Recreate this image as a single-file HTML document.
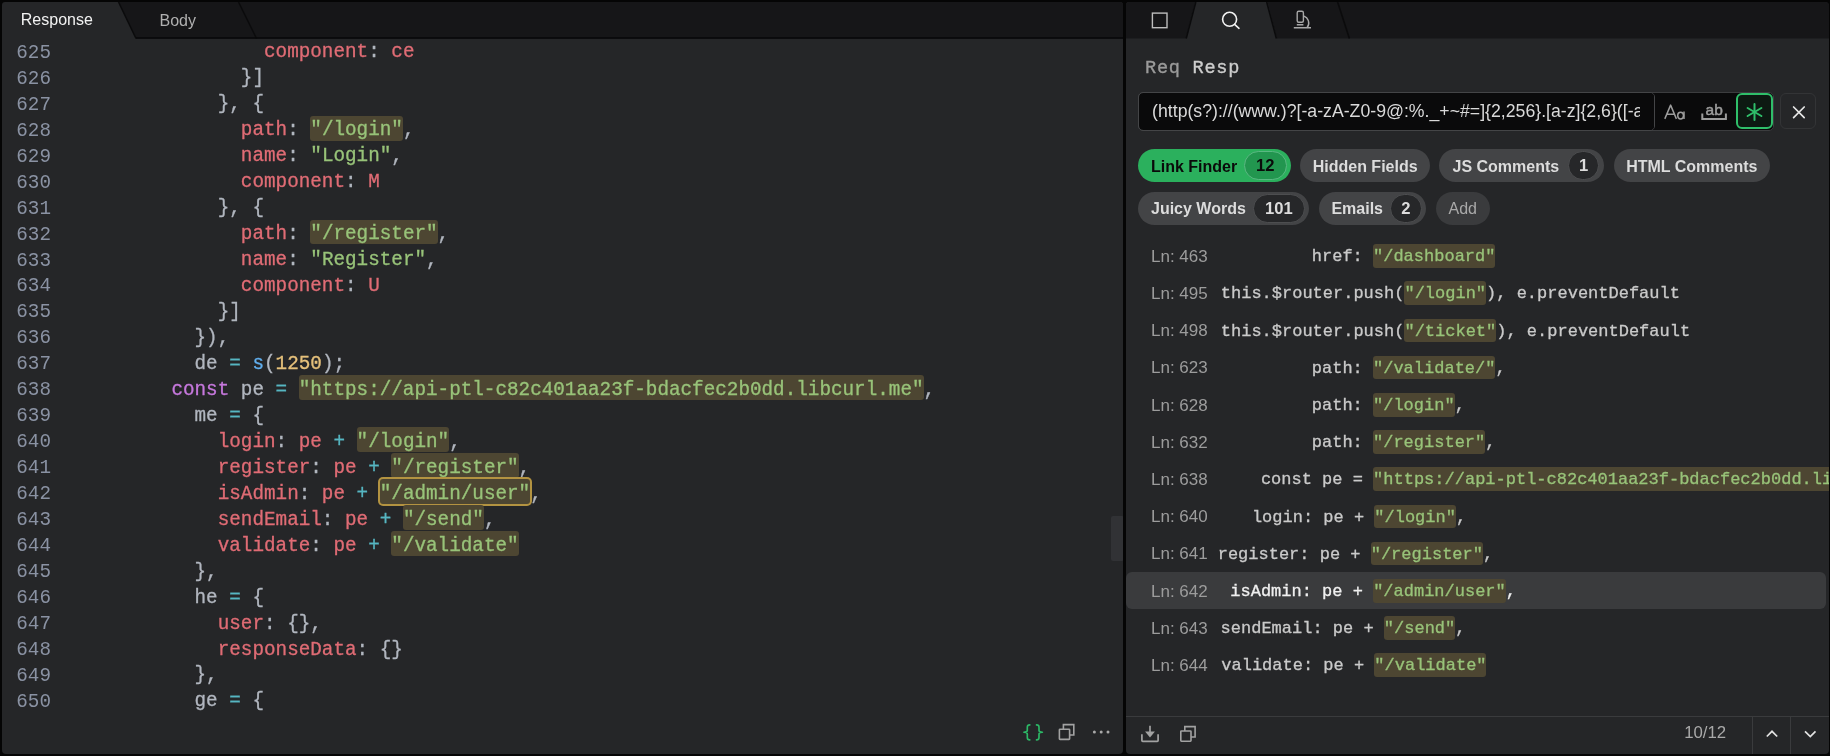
<!DOCTYPE html>
<html><head><meta charset="utf-8">
<style>
*{box-sizing:border-box;margin:0;padding:0}
html,body{width:1830px;height:756px;overflow:hidden;background:#050505}
body{position:relative;font-family:"Liberation Sans",sans-serif}
.panel{position:absolute;background:#252628;overflow:hidden;will-change:transform}
#lp{left:2px;top:1.5px;width:1120.8px;height:751.5px;border-radius:3px 3px 4px 4px}
#rp{left:1126px;top:1.5px;width:702.5px;height:751.5px;border-radius:3px 4px 4px 4px}
.tabbar{position:absolute;left:0;top:0;right:0;height:36.5px}
.tabbar svg{position:absolute;left:0;top:0}
.tab-label{position:absolute;font-size:16px;line-height:20px}
#code{position:absolute;left:0;top:0;width:1121.5px;height:751.5px;z-index:0;will-change:transform}
.ln{position:absolute;left:8.5px;width:40px;text-align:right;transform:scaleX(0.95);transform-origin:100% 50%;height:26px;line-height:26px;font:20.3px "Liberation Mono",monospace;line-height:26px;color:#8a92a3;white-space:pre}
.cl{position:absolute;height:26px;font:19.3px "Liberation Mono",monospace;line-height:26px;color:#b1b6bf;white-space:pre;-webkit-text-stroke:0.3px currentColor}
.r{color:#e06c75}.g{color:#98c379}.c{color:#56b6c2}.p{color:#c678dd}.o{color:#e5c07b}.b{color:#61afef}
.hl,.hlc{position:absolute;height:24.8px;background:#4d4632;border-radius:3px}
.hlc{box-shadow:0 0 0 2px #b39341}
#results{position:absolute;left:0;top:0;width:702.5px;height:751.5px;z-index:0}
.rsel{position:absolute;left:0;width:700px;height:37.2px;background:#3a3b3d;border-radius:6px}
.rl{position:absolute;left:25px;height:26px;line-height:26px;font-size:17px;color:#9c9c9c;white-space:pre}
.rt{position:absolute;height:26px;line-height:26px;font:17px "Liberation Mono",monospace;color:#cacaca;white-space:pre;-webkit-text-stroke:0.3px currentColor}
.rt.sel{color:#f0f0f0}
.rhl{position:absolute;height:23.8px;background:#4d4632;border-radius:3px}
.reqresp{position:absolute;font:18.6px "Liberation Mono",monospace;letter-spacing:0.72px;-webkit-text-stroke:0.35px currentColor;line-height:20px;white-space:pre}
#inwrap{position:absolute;left:11.9px;top:90px;width:636px;height:38.8px;border:1px solid #3c3d3f;border-radius:5px;background:#0a0a0b}
#intext{position:absolute;left:-1px;top:-1px;width:517.5px;height:38.8px;border:1.3px solid #444547;border-radius:5px;padding-left:13.2px;font-size:17.7px;line-height:36.4px;color:#dadada;white-space:pre;overflow:hidden}
#intext::after{content:'';position:absolute;right:0;top:0;width:14px;height:100%;background:#0a0a0b}
#regex{position:absolute;left:610px;top:91px;width:37.4px;height:36px;border:2px solid #2fbf6a;border-radius:6px;background:#0d1912}
#closebtn{position:absolute;left:653.8px;top:91px;width:36.2px;height:36.4px;border:1px solid #333436;border-radius:6px}
.chip{position:absolute;height:33.3px;border-radius:17px;background:#434446}
.chip span{position:absolute;top:7.4px;font-weight:bold;font-size:16px;line-height:20px;color:#dcdcdc;white-space:pre}
.chip i{position:absolute;top:2.1px;height:28.8px;border-radius:14.4px;background:#262729;border:1.8px solid #4d4e50}
.chip i b{position:absolute;top:3.7px;text-align:center;font-style:normal;font-weight:bold;font-size:16.6px;line-height:20px;color:#dcdcdc}
.chip.green{background:#2bb05d}
.chip.green span{color:#0a0a0a}
.chip.green i{background:#22964f;border-color:#5ab882}
.chip.green i b{color:#0a0a0a}
.chip.add{background:#3a3b3d}
.chip.add span{font-weight:normal;color:#a9a9a9}
</style></head><body>
<div id="lp" class="panel">
  <div class="tabbar">
    <svg width="1122" height="38">
      <path d="M116.5 0 L1122 0 L1122 36.5 L134 36.5 Z" fill="#161618"/>
      <path d="M116.5 0 L134 36.5" stroke="#0b0b0c" stroke-width="1.5"/>
      <path d="M236.5 0 L254.5 36.5" stroke="#0b0b0c" stroke-width="1.5"/>
      <path d="M134 36 L1122 36" stroke="#070708" stroke-width="1.6"/>
    </svg>
    <div class="tab-label" style="left:18.8px;top:7.7px;color:#f2f2f2">Response</div>
    <div class="tab-label" style="left:157.5px;top:8.5px;color:#b0b0b0">Body</div>
  </div>
  <div id="code">
<div class="ln" style="top:37.80px">625</div>
<div class="cl" style="top:37.30px;left:262.02px"><span class="r">component</span>: <span class="r">ce</span></div>
<div class="ln" style="top:63.77px">626</div>
<div class="cl" style="top:63.27px;left:238.86px">}]</div>
<div class="ln" style="top:89.73px">627</div>
<div class="cl" style="top:89.23px;left:215.71px">}, {</div>
<div class="ln" style="top:115.70px">628</div>
<div class="hl" style="left:308.32px;top:113.80px;width:92.61px"></div>
<div class="cl" style="top:115.20px;left:238.86px"><span class="r">path</span>: <span class="g">&quot;/login&quot;</span>,</div>
<div class="ln" style="top:141.66px">629</div>
<div class="cl" style="top:141.16px;left:238.86px"><span class="r">name</span>: <span class="g">&quot;Login&quot;</span>,</div>
<div class="ln" style="top:167.63px">630</div>
<div class="cl" style="top:167.13px;left:238.86px"><span class="r">component</span>: <span class="r">M</span></div>
<div class="ln" style="top:193.60px">631</div>
<div class="cl" style="top:193.10px;left:215.71px">}, {</div>
<div class="ln" style="top:219.56px">632</div>
<div class="hl" style="left:308.32px;top:217.66px;width:127.34px"></div>
<div class="cl" style="top:219.06px;left:238.86px"><span class="r">path</span>: <span class="g">&quot;/register&quot;</span>,</div>
<div class="ln" style="top:245.53px">633</div>
<div class="cl" style="top:245.03px;left:238.86px"><span class="r">name</span>: <span class="g">&quot;Register&quot;</span>,</div>
<div class="ln" style="top:271.49px">634</div>
<div class="cl" style="top:270.99px;left:238.86px"><span class="r">component</span>: <span class="r">U</span></div>
<div class="ln" style="top:297.46px">635</div>
<div class="cl" style="top:296.96px;left:215.71px">}]</div>
<div class="ln" style="top:323.43px">636</div>
<div class="cl" style="top:322.93px;left:192.56px">}),</div>
<div class="ln" style="top:349.39px">637</div>
<div class="cl" style="top:348.89px;left:192.56px">de <span class="c">=</span> <span class="b">s</span>(<span class="o">1250</span>);</div>
<div class="ln" style="top:375.36px">638</div>
<div class="hl" style="left:296.74px;top:373.46px;width:625.10px"></div>
<div class="cl" style="top:374.86px;left:169.41px"><span class="p">const</span> pe <span class="c">=</span> <span class="g">&quot;https://api-ptl-c82c401aa23f-bdacfec2b0dd.libcurl.me&quot;</span>,</div>
<div class="ln" style="top:401.32px">639</div>
<div class="cl" style="top:400.82px;left:192.56px">me <span class="c">=</span> {</div>
<div class="ln" style="top:427.29px">640</div>
<div class="hl" style="left:354.62px;top:425.39px;width:92.61px"></div>
<div class="cl" style="top:426.79px;left:215.71px"><span class="r">login</span>: <span class="r">pe</span> <span class="c">+</span> <span class="g">&quot;/login&quot;</span>,</div>
<div class="ln" style="top:453.26px">641</div>
<div class="hl" style="left:389.35px;top:451.36px;width:127.34px"></div>
<div class="cl" style="top:452.76px;left:215.71px"><span class="r">register</span>: <span class="r">pe</span> <span class="c">+</span> <span class="g">&quot;/register&quot;</span>,</div>
<div class="ln" style="top:479.22px">642</div>
<div class="hlc" style="left:377.78px;top:477.32px;width:150.49px"></div>
<div class="cl" style="top:478.72px;left:215.71px"><span class="r">isAdmin</span>: <span class="r">pe</span> <span class="c">+</span> <span class="g">&quot;/admin/user&quot;</span>,</div>
<div class="ln" style="top:505.19px">643</div>
<div class="hl" style="left:400.93px;top:503.29px;width:81.03px"></div>
<div class="cl" style="top:504.69px;left:215.71px"><span class="r">sendEmail</span>: <span class="r">pe</span> <span class="c">+</span> <span class="g">&quot;/send&quot;</span>,</div>
<div class="ln" style="top:531.15px">644</div>
<div class="hl" style="left:389.35px;top:529.25px;width:127.34px"></div>
<div class="cl" style="top:530.65px;left:215.71px"><span class="r">validate</span>: <span class="r">pe</span> <span class="c">+</span> <span class="g">&quot;/validate&quot;</span></div>
<div class="ln" style="top:557.12px">645</div>
<div class="cl" style="top:556.62px;left:192.56px">},</div>
<div class="ln" style="top:583.09px">646</div>
<div class="cl" style="top:582.59px;left:192.56px">he <span class="c">=</span> {</div>
<div class="ln" style="top:609.05px">647</div>
<div class="cl" style="top:608.55px;left:215.71px"><span class="r">user</span>: {},</div>
<div class="ln" style="top:635.02px">648</div>
<div class="cl" style="top:634.52px;left:215.71px"><span class="r">responseData</span>: {}</div>
<div class="ln" style="top:660.98px">649</div>
<div class="cl" style="top:660.48px;left:192.56px">},</div>
<div class="ln" style="top:686.95px">650</div>
<div class="cl" style="top:686.45px;left:192.56px">ge <span class="c">=</span> {</div>
  </div>
  <div style="position:absolute;left:1109px;top:514px;width:12.5px;height:45px;background:#313235;border-radius:2px"></div>
  <svg style="position:absolute;left:0;top:700px" width="1122" height="52">
    <g fill="none" stroke="#2cb866" stroke-width="1.65" stroke-linecap="round" stroke-linejoin="round">
      <path d="M1027.8 22.9 Q1025.3 22.9 1025.3 25.2 V28.6 Q1025.3 30.1 1021.9 30.3 Q1025.3 30.5 1025.3 32 V35.5 Q1025.3 37.9 1027.8 37.9"/>
      <path d="M1034.5 22.9 Q1037 22.9 1037 25.2 V28.6 Q1037 30.1 1040.4 30.3 Q1037 30.5 1037 32 V35.5 Q1037 37.9 1034.5 37.9"/>
    </g>
    <g fill="none" stroke="#a2a2a2" stroke-width="1.6">
      <rect x="1057.4" y="27.2" width="10.2" height="10.2" rx="0.6"/>
      <path d="M1061.4 27.2 V22.6 H1071.8 V33 H1067.6"/>
    </g>
    <g fill="#a9a9a9">
      <circle cx="1092.4" cy="30" r="1.5"/><circle cx="1099.2" cy="30" r="1.5"/><circle cx="1106" cy="30" r="1.5"/>
    </g>
  </svg>
</div>
<div id="rp" class="panel">
  <div class="tabbar">
    <svg width="703" height="38">
      <path d="M0 36.5 L0 0 L69 0 L59.7 36.5 Z" fill="#161618"/>
      <path d="M141.7 0 L703 0 L703 36.5 L151 36.5 Z" fill="#161618"/>
      <path d="M69.8 0 L60.2 36.5" stroke="#0b0b0c" stroke-width="1.6"/>
      <path d="M140.7 0 L150.4 36.5" stroke="#0b0b0c" stroke-width="1.6"/>
      <path d="M211.6 0 L223.4 36.5" stroke="#0b0b0c" stroke-width="1.6"/>
      <rect x="26.4" y="11.1" width="14.6" height="14.6" fill="none" stroke="#bdbdbd" stroke-width="1.4"/>
      <circle cx="103.6" cy="17.3" r="7" fill="none" stroke="#f2f2f2" stroke-width="1.6"/>
      <path d="M108.6 22.4 L113 26.3" stroke="#f2f2f2" stroke-width="1.6" stroke-linecap="round"/>
      <g fill="none" stroke="#a8a8a8" stroke-width="1.4">
        <rect x="171.2" y="9.2" width="6.2" height="11" rx="1.5"/>
        <path d="M170.8 22.8 H177.4"/>
        <path d="M167.8 25.7 H185"/>
        <path d="M177.4 13.8 A8 7.6 0 0 1 181 25.7"/>
      </g>
    </svg>
  </div>
  <div class="reqresp" style="left:19px;top:56.5px"><span style="color:#9a9a9a">Req</span> <span style="color:#cdcdcd">Resp</span></div>
  <div id="inwrap">
    <div id="intext">(http(s?)://(www.)?[-a-zA-Z0-9@:%._+~#=]{2,256}.[a-z]{2,6}([-a-zA-Z0-9@:%_+.~#?&amp;//=]*)</div>
  </div>
  <svg style="position:absolute;left:0;top:0" width="703" height="140">
    <g fill="none" stroke="#9c9c9c" stroke-width="1.5" stroke-linejoin="round">
      <path d="M538.8 116.9 L544.6 103.1 L550.4 116.9 M541 112.3 H548.2"/>
      <ellipse cx="554.6" cy="113.6" rx="2.9" ry="3.4"/>
      <path d="M558 109.6 V117.1"/>
    </g>
    <text x="579.6" y="113.4" font-family="Liberation Sans" font-size="15.5" fill="#9c9c9c" stroke="#9c9c9c" stroke-width="0.5">ab</text>
    <path d="M576.3 111.6 V116.9 H599.9 V111.6" fill="none" stroke="#9c9c9c" stroke-width="2"/>
  </svg>
  <div id="regex"></div>
  <svg style="position:absolute;left:610px;top:91px" width="37" height="36">
    <g stroke="#2fbf6a" stroke-width="2" stroke-linecap="round">
      <path d="M18.5 11 V27"/>
      <path d="M11.6 15 L25.4 23"/>
      <path d="M25.4 15 L11.6 23"/>
    </g>
  </svg>
  <div id="closebtn"><svg width="36" height="36" style="position:absolute;left:0;top:0"><path d="M12.6 13 L23.2 23.6 M23.2 13 L12.6 23.6" stroke="#e6e6e6" stroke-width="1.7" stroke-linecap="round"/></svg></div>
  <div class="chip green" style="left:11.9px;top:147.2px;width:152.9px"><span style="left:13.1px">Link Finder</span><i style="left:105.7px;width:43.2px"><b style="left:0;right:0">12</b></i></div>
  <div class="chip" style="left:174px;top:147.2px;width:129.8px"><span style="left:12.7px">Hidden Fields</span></div>
  <div class="chip" style="left:313.3px;top:147.2px;width:164.7px"><span style="left:13.2px">JS Comments</span><i style="left:128.7px;width:31.4px"><b style="left:0;right:0">1</b></i></div>
  <div class="chip" style="left:487.8px;top:147.2px;width:156px"><span style="left:12.4px">HTML Comments</span></div>
  <div class="chip" style="left:11.9px;top:190.1px;width:171.3px"><span style="left:13.1px">Juicy Words</span><i style="left:115.1px;width:51.8px"><b style="left:0;right:0">101</b></i></div>
  <div class="chip" style="left:192.8px;top:190.1px;width:107px"><span style="left:12.6px">Emails</span><i style="left:70.8px;width:32.4px"><b style="left:0;right:0">2</b></i></div>
  <div class="chip add" style="left:310px;top:190.1px;width:53.8px"><span style="left:12.5px">Add</span></div>
  <div id="results">
<div class="rl" style="top:241.70px">Ln: 463</div>
<div class="rhl" style="left:247.00px;top:242.10px;width:122.40px"></div>
<div class="rt" style="top:245.10px;left:185.80px">href: <span class="g">&quot;/dashboard&quot;</span></div>
<div class="rl" style="top:278.90px">Ln: 495</div>
<div class="rhl" style="left:278.40px;top:279.30px;width:81.60px"></div>
<div class="rt" style="top:282.30px;left:94.80px">this.$router.push(<span class="g">&quot;/login&quot;</span>), e.preventDefault</div>
<div class="rl" style="top:316.10px">Ln: 498</div>
<div class="rhl" style="left:278.40px;top:316.50px;width:91.80px"></div>
<div class="rt" style="top:319.50px;left:94.80px">this.$router.push(<span class="g">&quot;/ticket&quot;</span>), e.preventDefault</div>
<div class="rl" style="top:353.30px">Ln: 623</div>
<div class="rhl" style="left:247.00px;top:353.70px;width:122.40px"></div>
<div class="rt" style="top:356.70px;left:185.80px">path: <span class="g">&quot;/validate/&quot;</span>,</div>
<div class="rl" style="top:390.50px">Ln: 628</div>
<div class="rhl" style="left:247.00px;top:390.90px;width:81.60px"></div>
<div class="rt" style="top:393.90px;left:185.80px">path: <span class="g">&quot;/login&quot;</span>,</div>
<div class="rl" style="top:427.70px">Ln: 632</div>
<div class="rhl" style="left:247.00px;top:428.10px;width:112.20px"></div>
<div class="rt" style="top:431.10px;left:185.80px">path: <span class="g">&quot;/register&quot;</span>,</div>
<div class="rl" style="top:464.90px">Ln: 638</div>
<div class="rhl" style="left:247.10px;top:465.30px;width:550.80px"></div>
<div class="rt" style="top:468.30px;left:134.90px">const pe = <span class="g">&quot;https://api-ptl-c82c401aa23f-bdacfec2b0dd.libcurl.me&quot;</span>,</div>
<div class="rl" style="top:502.10px">Ln: 640</div>
<div class="rhl" style="left:248.30px;top:502.50px;width:81.60px"></div>
<div class="rt" style="top:505.50px;left:125.90px">login: pe + <span class="g">&quot;/login&quot;</span>,</div>
<div class="rl" style="top:539.30px">Ln: 641</div>
<div class="rhl" style="left:244.70px;top:539.70px;width:112.20px"></div>
<div class="rt" style="top:542.70px;left:91.70px">register: pe + <span class="g">&quot;/register&quot;</span>,</div>
<div class="rsel" style="top:570.20px"></div>
<div class="rl sel" style="top:576.50px">Ln: 642</div>
<div class="rhl" style="left:247.10px;top:576.90px;width:132.60px"></div>
<div class="rt sel" style="top:579.90px;left:104.30px">isAdmin: pe + <span class="g">&quot;/admin/user&quot;</span>,</div>
<div class="rl" style="top:613.70px">Ln: 643</div>
<div class="rhl" style="left:257.80px;top:614.10px;width:71.40px"></div>
<div class="rt" style="top:617.10px;left:94.60px">sendEmail: pe + <span class="g">&quot;/send&quot;</span>,</div>
<div class="rl" style="top:650.90px">Ln: 644</div>
<div class="rhl" style="left:248.30px;top:651.30px;width:112.20px"></div>
<div class="rt" style="top:654.30px;left:95.30px">validate: pe + <span class="g">&quot;/validate&quot;</span></div>
  </div>
  <div style="position:absolute;left:0;top:714.3px;width:703px;height:1px;background:#3a3b3d"></div>
  <div style="position:absolute;left:626.1px;top:714.8px;width:1px;height:37px;background:#3a3b3d"></div>
  <div style="position:absolute;left:664.2px;top:714.8px;width:1px;height:37px;background:#3a3b3d"></div>
  <svg style="position:absolute;left:0;top:700px" width="703" height="52">
    <g fill="none" stroke="#a2a2a2" stroke-width="1.7" stroke-linejoin="round">
      <path d="M15.9 32.2 V38.6 Q15.9 39.4 16.7 39.4 H31.3 Q32.1 39.4 32.1 38.6 V32.2"/>
      <path d="M24 23.8 V31"/>
    </g>
    <path d="M19.1 29.6 L24 35.6 L28.9 29.6 Z" fill="#a2a2a2"/>
    <g fill="none" stroke="#a2a2a2" stroke-width="1.6">
      <rect x="54.8" y="29" width="10.2" height="10.2" rx="0.6"/>
      <path d="M58.8 29 V24.6 H69.1 V35 H65"/>
    </g>
    <path d="M640.8 34.5 L646 29.3 L651.2 34.5" fill="none" stroke="#e2e2e2" stroke-width="1.7"/>
    <path d="M679 29.3 L684.3 34.5 L689.5 29.3" fill="none" stroke="#e2e2e2" stroke-width="1.7"/>
  </svg>
  <div style="position:absolute;left:558.2px;top:721.2px;font-size:16.8px;line-height:20px;color:#a9a9a9">10/12</div>
</div>
</body></html>
